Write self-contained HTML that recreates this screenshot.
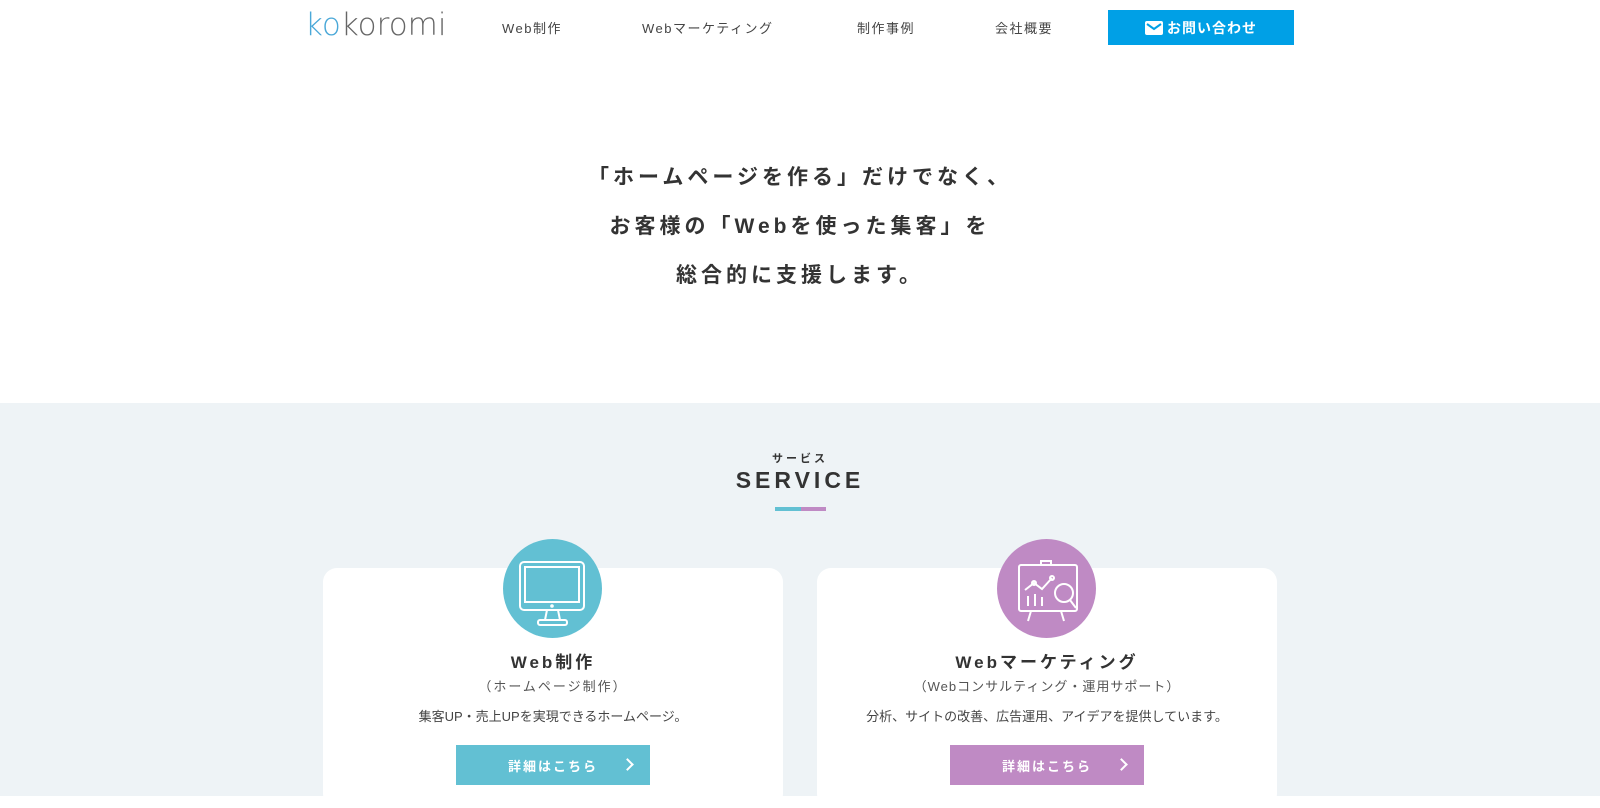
<!DOCTYPE html>
<html><head><meta charset="utf-8"><style>
*{margin:0;padding:0;box-sizing:border-box}
body{width:1600px;height:796px;overflow:hidden;background:#fff;font-family:"Liberation Sans","Noto Sans CJK JP",sans-serif;color:#333}
.hdr{position:absolute;top:0;left:0;width:1600px;height:56px}
.logo{position:absolute;left:305px;top:7px;font-size:31px;color:#666;font-family:"DejaVu Sans","Liberation Sans",sans-serif;font-weight:200}
.logo span{color:#4aa8d8}
.nav{position:absolute;top:18px;font-size:13px;letter-spacing:1.5px;color:#444}
.cta{position:absolute;left:1108px;top:10px;width:186px;height:35px;background:#00a0e6;color:#fff;font-size:14px;font-weight:bold;display:flex;align-items:center;justify-content:center;letter-spacing:1px}
.hero{position:absolute;top:0;left:0;width:1600px;text-align:center;font-size:21px;font-weight:bold;letter-spacing:4px;color:#333}
.gray{position:absolute;top:403px;left:0;width:1600px;height:393px;background:#eef3f6}
.card{position:absolute;top:568px;width:460px;height:240px;background:#fff;border-radius:14px;text-align:center}
.circle{position:absolute;top:539px;width:99px;height:99px;border-radius:50%}
.t{position:absolute;width:460px;text-align:center}
.btn{position:absolute;top:745px;width:194px;height:40px;color:#fff;font-size:13px;font-weight:bold;letter-spacing:2px;display:flex;align-items:center;justify-content:center}
.btn i{position:absolute;right:18px;top:15px;width:9px;height:9px;border-right:2px solid #fff;border-top:2px solid #fff;transform:rotate(45deg)}
</style></head><body>
<div class="hdr">
<div class="logo"><span>ko</span>koromi</div>
<div class="nav" style="left:502px">Web制作</div>
<div class="nav" style="left:642px">Webマーケティング</div>
<div class="nav" style="left:857px">制作事例</div>
<div class="nav" style="left:995px">会社概要</div>
<div class="cta"><svg width="18" height="14" viewBox="0 0 18 14" style="margin-right:4px"><rect x="0" y="0" width="18" height="14" rx="2" fill="#fff"/><path d="M2 3l7 5 7-5" stroke="#00a0e6" stroke-width="2" fill="none"/></svg>お問い合わせ</div>
</div>
<div class="hero" style="top:161px">「ホームページを作る」だけでなく、</div>
<div class="hero" style="top:210px">お客様の「Webを使った集客」を</div>
<div class="hero" style="top:259px">総合的に支援します。</div>
<div class="gray"></div>
<div style="position:absolute;top:450px;width:1600px;text-align:center;font-size:11px;font-weight:bold;letter-spacing:3px;color:#333">サービス</div>
<div style="position:absolute;top:467px;width:1600px;text-align:center;font-size:23px;font-weight:bold;letter-spacing:4px;color:#333">SERVICE</div>
<div style="position:absolute;top:507px;left:775px;width:26px;height:4px;background:#62c0d3"></div>
<div style="position:absolute;top:507px;left:801px;width:25px;height:4px;background:#bf8ac4"></div>

<div class="card" style="left:323px"></div>
<div class="card" style="left:817px"></div>
<div class="circle" style="left:503px;background:#62c0d3"><svg width="99" height="99" viewBox="0 0 99 99" fill="none" stroke="#fff" stroke-width="2"><rect x="17" y="23" width="64" height="48" rx="4"/><rect x="22" y="28" width="54" height="35"/><path d="M44 71l-2 10M55 71l2 10"/><rect x="35" y="81" width="29" height="5" rx="2"/><circle cx="49" cy="67" r="0.8"/></svg></div>
<div class="circle" style="left:997px;background:#bf8ac4"><svg width="99" height="99" viewBox="0 0 99 99" fill="none" stroke="#fff" stroke-width="2"><rect x="22" y="26" width="58" height="46" rx="2"/><rect x="44" y="22" width="10" height="4"/><path d="M28 51l9-7 8 6 10-11"/><circle cx="37" cy="44" r="2"/><circle cx="55" cy="39" r="2"/><path d="M31 57v10M38 55v12M45 58v9"/><circle cx="67" cy="54" r="9"/><path d="M73 61l6 8M34 72l-3 10M64 72l3 10"/></svg></div>

<div class="t" style="left:323px;top:648px;font-size:17px;font-weight:bold;letter-spacing:3px">Web制作</div>
<div class="t" style="left:323px;top:676px;font-size:13px;letter-spacing:2px;color:#555">（ホームページ制作）</div>
<div class="t" style="left:323px;top:706px;font-size:13px;color:#444">集客UP・売上UPを実現できるホームページ。</div>
<div class="btn" style="left:456px;background:#62c0d3">詳細はこちら<i></i></div>

<div class="t" style="left:817px;top:648px;font-size:17px;font-weight:bold;letter-spacing:3px">Webマーケティング</div>
<div class="t" style="left:817px;top:676px;font-size:13px;letter-spacing:1px;color:#555">（Webコンサルティング・運用サポート）</div>
<div class="t" style="left:817px;top:706px;font-size:13px;color:#444">分析、サイトの改善、広告運用、アイデアを提供しています。</div>
<div class="btn" style="left:950px;background:#bf8ac4">詳細はこちら<i></i></div>
</body></html>
